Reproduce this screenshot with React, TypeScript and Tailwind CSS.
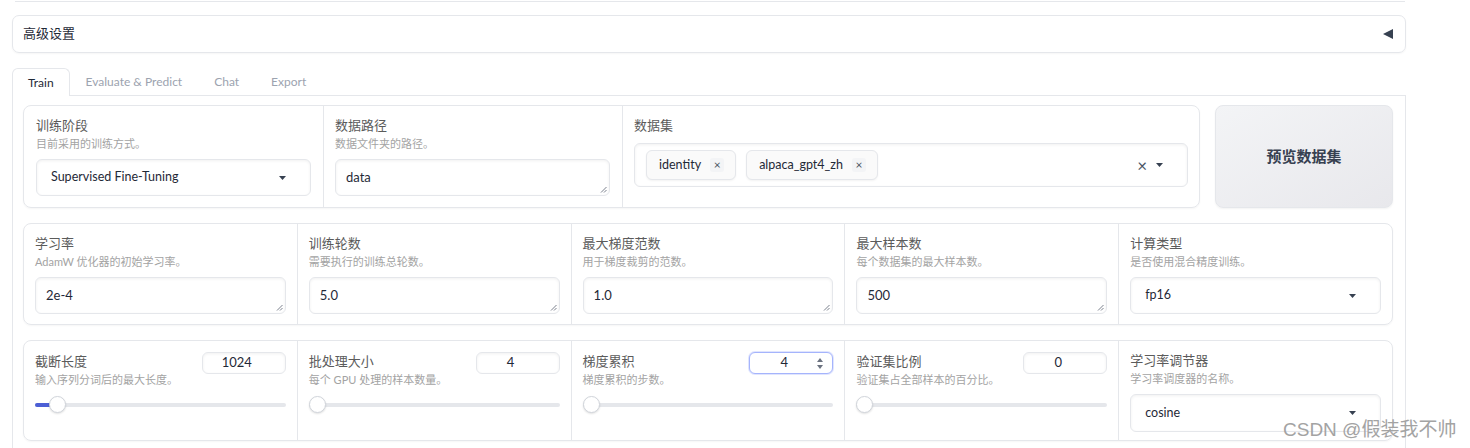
import React from "react";

const FONT = "font-[family-name:Lato,'Noto_Sans_CJK_SC',sans-serif]";

const Caret = () => (
  <svg width="7" height="4" viewBox="0 0 7 4" className="shrink-0">
    <path d="M0 0h7L3.5 4z" fill="#374151" />
  </svg>
);

const Resize = () => (
  <svg className="absolute right-[2px] bottom-[2px]" width="7" height="7" viewBox="0 0 7 7">
    <path d="M6.5 1 1 6.5M6.5 4 4 6.5" stroke="#6b7280" strokeWidth="0.9" />
  </svg>
);

const inputBase =
  "rounded-[6px] border border-[#e5e7eb] bg-white shadow-[inset_0_1px_3px_rgba(0,0,0,0.06)] flex items-center text-[13px] text-[#1f2937]";

function Head({ label, desc }: { label: string; desc?: string }) {
  return (
    <>
      <div className="text-[13px] leading-[18px] text-[#5b5b5b]">{label}</div>
      {desc && <div className="mt-[2px] text-[11px] leading-[16px] text-[#a3a3a3]">{desc}</div>}
    </>
  );
}

function TextBox({ value }: { value: string }) {
  return (
    <div className={`${inputBase} relative h-[37px] mt-[7px] pl-[10px]`}>
      {value}
      <Resize />
    </div>
  );
}

function Select({ value, h = "h-[37px]" }: { value: string; h?: string }) {
  return (
    <div className={`${inputBase} ${h} mt-[7px] pl-[14px] pr-[24px] justify-between`}>
      <span className="text-[12.5px]">{value}</span>
      <Caret />
    </div>
  );
}

function SliderCol({
  label,
  desc,
  value,
  fill = 0,
  focus = false,
}: {
  label: string;
  desc: string;
  value: string;
  fill?: number;
  focus?: boolean;
}) {
  return (
    <div className="flex-1 px-[11px] pt-[11px] border-r border-[#e5e7eb]">
      <div className="flex justify-between items-start">
        <div>
          <Head label={label} desc={desc} />
        </div>
        <div
          className={`relative w-[84px] h-[22px] rounded-[6px] border bg-white flex items-center justify-center pr-[14px] text-[13px] text-[#1f2937] ${
            focus
              ? "border-[#a5b4fc] shadow-[0_0_0_1px_rgba(165,180,252,0.35)]"
              : "border-[#e5e7eb] shadow-[inset_0_1px_3px_rgba(0,0,0,0.06)]"
          }`}
        >
          {value}
          {focus && (
            <svg className="absolute right-[9px] top-[5px]" width="6" height="11" viewBox="0 0 6 11">
              <path d="M0 4h6L3 0z" fill="#6b7280" />
              <path d="M0 7h6L3 11z" fill="#6b7280" />
            </svg>
          )}
        </div>
      </div>
      <div className="relative mt-[8px] h-[18px] flex items-center">
        <div className="w-full h-[4px] rounded-full bg-[#e5e7eb] flex">
          {fill > 0 && <div className="h-full rounded-l-full bg-[#4c5fd5]" style={{ width: fill }} />}
        </div>
        <div
          className="absolute top-[0px] w-[17px] h-[17px] rounded-full bg-white border border-[#d1d5db] shadow-[0_1px_2px_rgba(0,0,0,0.12)]"
          style={{ left: fill > 0 ? fill - 1 : 0 }}
        />
      </div>
    </div>
  );
}

function Chip({ text }: { text: string }) {
  return (
    <div className="h-[30px] flex items-center pl-[12px] pr-[11px] rounded-[6px] border border-[#e5e7eb] bg-[#fafafa] shadow-[0_1px_2px_rgba(0,0,0,0.05)] text-[12.5px] text-[#1f2937]">
      <span>{text}</span>
      <span className="ml-[9px] w-[14px] h-[14px] rounded-[3px] bg-[#f3f4f6] flex items-center justify-center text-[12px] leading-none text-[#4b5563]">
        ×
      </span>
    </div>
  );
}

export default function App() {
  return (
    <div className={`relative w-[1470px] h-[448px] overflow-hidden bg-white ${FONT}`}>
      {/* top remnant */}
      <div className="h-[2px] ml-[15px] w-[1390px] border-b border-[#e5e7eb]" />

      {/* accordion */}
      <div className="ml-[12px] mt-[13px] w-[1394px] h-[38px] rounded-[7px] border border-[#e5e7eb] shadow-[0_1px_2px_rgba(0,0,0,0.04)] flex items-center justify-between pl-[10px] pr-[12px]">
        <span className="text-[13px] text-[#1f2937]">高级设置</span>
        <svg width="10" height="10" viewBox="0 0 10 10">
          <path d="M10 0v10L0 5z" fill="#374151" />
        </svg>
      </div>

      {/* tabs */}
      <div className="ml-[12px] mt-[15px] w-[1394px]">
        <div className="flex border-b border-[#e5e7eb] text-[12px]">
          <div className="-mb-px h-[28px] px-[15px] pt-[1px] flex items-center bg-white border border-b-0 border-[#e5e7eb] rounded-t-[6px] text-[#1f2937]">
            Train
          </div>
          <div className="h-[27px] pt-[1px] px-[16px] flex items-center text-[#9ca3af]">Evaluate &amp; Predict</div>
          <div className="h-[27px] pt-[1px] px-[16px] flex items-center text-[#9ca3af]">Chat</div>
          <div className="h-[27px] pt-[1px] px-[16px] flex items-center text-[#9ca3af]">Export</div>
        </div>

        <div className="border-l border-r border-[#e5e7eb] h-[400px] pl-[10px] pr-[12px] pt-[9px] flex flex-col gap-[15px]">
          {/* row 1 */}
          <div className="flex gap-[15px] h-[103px]">
            <div className="flex w-[1177px] rounded-[8px] border border-[#e5e7eb] shadow-[0_1px_2px_rgba(0,0,0,0.04)]">
              <div className="w-[300px] px-[12px] pt-[10px] border-r border-[#e5e7eb]">
                <Head label="训练阶段" desc="目前采用的训练方式。" />
                <Select value="Supervised Fine-Tuning" />
              </div>
              <div className="w-[299px] pl-[11px] pr-[12px] pt-[10px] border-r border-[#e5e7eb]">
                <Head label="数据路径" desc="数据文件夹的路径。" />
                <TextBox value="data" />
              </div>
              <div className="flex-1 pl-[11px] pr-[11px] pt-[10px]">
                <Head label="数据集" />
                <div className={`${inputBase} mt-[9px] h-[44px] pl-[11px] pr-[24px] justify-between`}>
                  <div className="flex gap-[10px]">
                    <Chip text="identity" />
                    <Chip text="alpaca_gpt4_zh" />
                  </div>
                  <div className="flex items-center gap-[9px]">
                    <span className="text-[17px] leading-none text-[#4b5563]">×</span>
                    <Caret />
                  </div>
                </div>
              </div>
            </div>
            <div className="flex-1 rounded-[8px] border border-[#e5e7eb] bg-linear-to-br from-[#f3f4f6] to-[#e8e8ec] shadow-[0_1px_2px_rgba(0,0,0,0.05)] flex items-center justify-center text-[15px] font-bold text-[#374151]">
              预览数据集
            </div>
          </div>

          {/* row 2 */}
          <div className="flex h-[102px] rounded-[8px] border border-[#e5e7eb] shadow-[0_1px_2px_rgba(0,0,0,0.04)]">
            {[
              ["学习率", "AdamW 优化器的初始学习率。", "2e-4"],
              ["训练轮数", "需要执行的训练总轮数。", "5.0"],
              ["最大梯度范数", "用于梯度裁剪的范数。", "1.0"],
              ["最大样本数", "每个数据集的最大样本数。", "500"],
            ].map(([l, d, v]) => (
              <div key={l} className="flex-1 px-[11px] pt-[10px] border-r border-[#e5e7eb]">
                <Head label={l} desc={d} />
                <TextBox value={v} />
              </div>
            ))}
            <div className="flex-1 px-[11px] pt-[10px]">
              <Head label="计算类型" desc="是否使用混合精度训练。" />
              <Select value="fp16" />
            </div>
          </div>

          {/* row 3 */}
          <div className="flex h-[101px] rounded-[8px] border border-[#e5e7eb] shadow-[0_1px_2px_rgba(0,0,0,0.04)]">
            <SliderCol label="截断长度" desc="输入序列分词后的最大长度。" value="1024" fill={15} />
            <SliderCol label="批处理大小" desc="每个 GPU 处理的样本数量。" value="4" />
            <SliderCol label="梯度累积" desc="梯度累积的步数。" value="4" focus />
            <SliderCol label="验证集比例" desc="验证集占全部样本的百分比。" value="0" />
            <div className="flex-1 px-[11px] pt-[10px]">
              <Head label="学习率调节器" desc="学习率调度器的名称。" />
              <Select value="cosine" h="h-[38px]" />
            </div>
          </div>
        </div>
      </div>

      {/* watermark */}
      <div className="absolute left-[1283px] top-[418px] text-[19px] leading-[24px] text-[#a3a3a3] font-[family-name:'Liberation_Sans','Noto_Sans_CJK_SC',sans-serif]">
        CSDN @假装我不帅
      </div>
    </div>
  );
}
